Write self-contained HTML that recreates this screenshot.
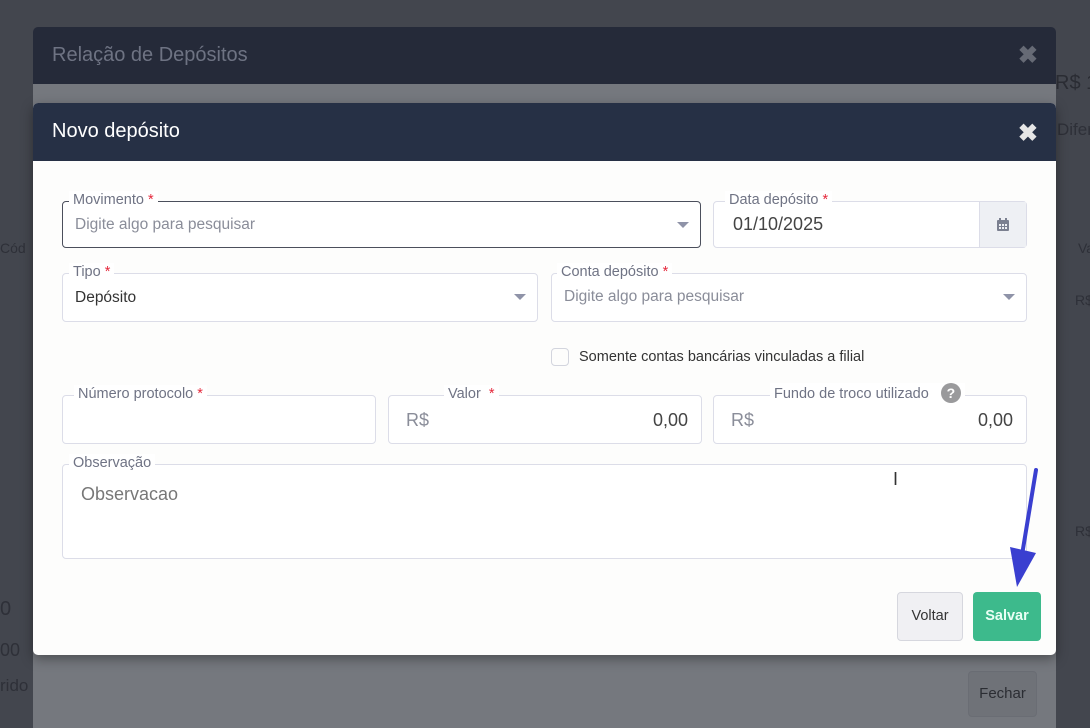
<!DOCTYPE html>
<html><head><meta charset="utf-8"><style>
*{box-sizing:border-box;margin:0;padding:0}
body{width:1090px;height:728px;overflow:hidden;background:#43464e;font-family:"Liberation Sans",sans-serif;position:relative}
.abs{position:absolute}
.bgt{position:absolute;color:#2e3038;font-size:15px;white-space:nowrap}
.outer-h{left:33px;top:27px;width:1023px;height:57px;background:#252a39;border-radius:5px 5px 0 0}
.outer-b{left:33px;top:84px;width:1023px;height:644px;background:#75787e}
.inner{left:33px;top:103px;width:1023px;height:552px;background:#fdfdfc;border-radius:5px;overflow:hidden;box-shadow:0 4px 12px rgba(0,0,0,.35)}
.ih{height:58px;background:#263045;color:#fff;font-size:20px;padding:17px 0 0 19px}
.x{position:absolute;right:18px;font-size:24px;font-weight:bold;color:#e6e6e6}
.f{position:absolute;border:1px solid #dcdde8;border-radius:4px;background:#fff}
.lab{position:absolute;top:-11px;background:#fff;padding:0 4px;font-size:14.5px;color:#6f7384;line-height:18px;white-space:nowrap}
.lab b{color:#e5283b;font-weight:normal}
.ph{position:absolute;left:12px;top:14px;font-size:15.5px;color:#8a8d99}
.val{position:absolute;font-size:18px;color:#444}
.caret{position:absolute;right:11px;top:20px;width:0;height:0;border-left:6px solid transparent;border-right:6px solid transparent;border-top:6px solid #8f93a8}
</style></head><body>
<div class="bgt" style="left:1055px;top:72px;font-size:20px;color:#2a2c33">R$ 1</div>
<div class="bgt" style="left:1057px;top:120px;font-size:17px">Difer</div>
<div class="bgt" style="left:0;top:240px;font-size:14px">Cód</div>
<div class="bgt" style="left:1078px;top:240px;font-size:14px">Va</div>
<div class="bgt" style="left:1075px;top:292px;font-size:14px">R$</div>
<div class="bgt" style="left:1075px;top:523px;font-size:14px">R$</div>
<div class="bgt" style="left:0;top:598px;font-size:20px">0</div>
<div class="bgt" style="left:0;top:640px;font-size:18px">00</div>
<div class="bgt" style="left:0;top:676px;font-size:17px">rido</div>
<div class="abs outer-h"><div style="color:#6e7383;font-size:20px;padding:17px 0 0 19px">Relação de Depósitos</div><div class="x" style="top:14px;color:#666a75">✖</div></div>
<div class="abs outer-b"></div>
<div class="abs" style="left:968px;top:671px;width:69px;height:46px;border:1px solid #6a6d74;border-radius:4px;background:#6f7278;color:#2b2d33;font-size:15px;text-align:center;line-height:44px">Fechar</div>
<div class="abs inner">
 <div class="ih">Novo depósito</div><div class="x" style="top:16px">✖</div>
 <div class="f" style="left:29px;top:98px;width:639px;height:47px;border-color:#4b4f5c"><div class="lab" style="left:6px">Movimento <b>*</b></div><div class="ph">Digite algo para pesquisar</div><div class="caret"></div></div>
 <div class="f" style="left:680px;top:98px;width:314px;height:47px"><div class="lab" style="left:11px">Data depósito <b>*</b></div><div class="val" style="left:19px;top:12px">01/10/2025</div>
  <div style="position:absolute;right:0;top:0;width:47px;height:45px;background:#eef0f4;border-left:1px solid #dcdde8"><svg width="14" height="14" style="position:absolute;left:16px;top:16px" viewBox="0 0 14 14"><rect x="1" y="2" width="12" height="11" rx="1" fill="#7b8090"/><rect x="3" y="0" width="2" height="3" fill="#7b8090"/><rect x="9" y="0" width="2" height="3" fill="#7b8090"/><g fill="#eef0f4"><rect x="3" y="6" width="2" height="2"/><rect x="6" y="6" width="2" height="2"/><rect x="9" y="6" width="2" height="2"/><rect x="3" y="9" width="2" height="2"/><rect x="6" y="9" width="2" height="2"/><rect x="9" y="9" width="2" height="2"/></g></svg></div></div>
 <div class="f" style="left:29px;top:170px;width:476px;height:49px"><div class="lab" style="left:6px">Tipo <b>*</b></div><div class="val" style="left:12px;top:15px;font-size:15.5px;color:#333">Depósito</div><div class="caret"></div></div>
 <div class="f" style="left:518px;top:170px;width:476px;height:49px"><div class="lab" style="left:5px">Conta depósito <b>*</b></div><div class="ph">Digite algo para pesquisar</div><div class="caret"></div></div>
 <div class="abs" style="left:518px;top:245px;width:18px;height:18px;border:1px solid #d3d5de;border-radius:4px"></div>
 <div class="abs" style="left:546px;top:246px;font-size:14.5px;color:#333">Somente contas bancárias vinculadas a filial</div>
 <div class="f" style="left:29px;top:292px;width:314px;height:49px"><div class="lab" style="left:11px">Número protocolo <b>*</b></div></div>
 <div class="f" style="left:355px;top:292px;width:314px;height:49px"><div class="lab" style="left:55px">Valor &nbsp;<b>*</b></div><div class="val" style="left:17px;top:14px;color:#8a8d99">R$</div><div class="val" style="right:13px;top:14px">0,00</div></div>
 <div class="f" style="left:680px;top:292px;width:314px;height:49px"><div class="lab" style="left:56px;top:-13px">Fundo de troco utilizado &nbsp;&nbsp;<span style="display:inline-block;width:20px;height:20px;border-radius:50%;background:#9a9a9c;color:#fff;font-weight:bold;text-align:center;line-height:20px;font-size:14px">?</span></div><div class="val" style="left:17px;top:14px;color:#8a8d99">R$</div><div class="val" style="right:13px;top:14px">0,00</div></div>
 <div class="f" style="left:29px;top:361px;width:965px;height:95px"><div class="lab" style="left:6px">Observação</div><div class="val" style="left:18px;top:19px;color:#777">Observacao</div></div>
 <div class="abs" style="left:860px;top:366px;font-size:18px;color:#333">I</div>
 <div class="abs" style="left:864px;top:489px;width:66px;height:49px;border:1px solid #d6d7de;border-radius:4px;background:#f0f0f3;font-size:14.5px;color:#333;text-align:center;line-height:47px">Voltar</div>
 <div class="abs" style="left:940px;top:489px;width:68px;height:49px;border-radius:4px;background:#3dba8c;font-size:14.5px;font-weight:bold;color:#eafff5;text-align:center;line-height:49px">Salvar</div>
</div>
<svg class="abs" style="left:1000px;top:465px" width="50" height="130" viewBox="0 0 50 130"><line x1="36" y1="5" x2="22" y2="90" stroke="#3a3fd0" stroke-width="4" stroke-linecap="round"/><polygon points="10,82 36,88 17,122" fill="#3a3fd0"/></svg>
</body></html>
